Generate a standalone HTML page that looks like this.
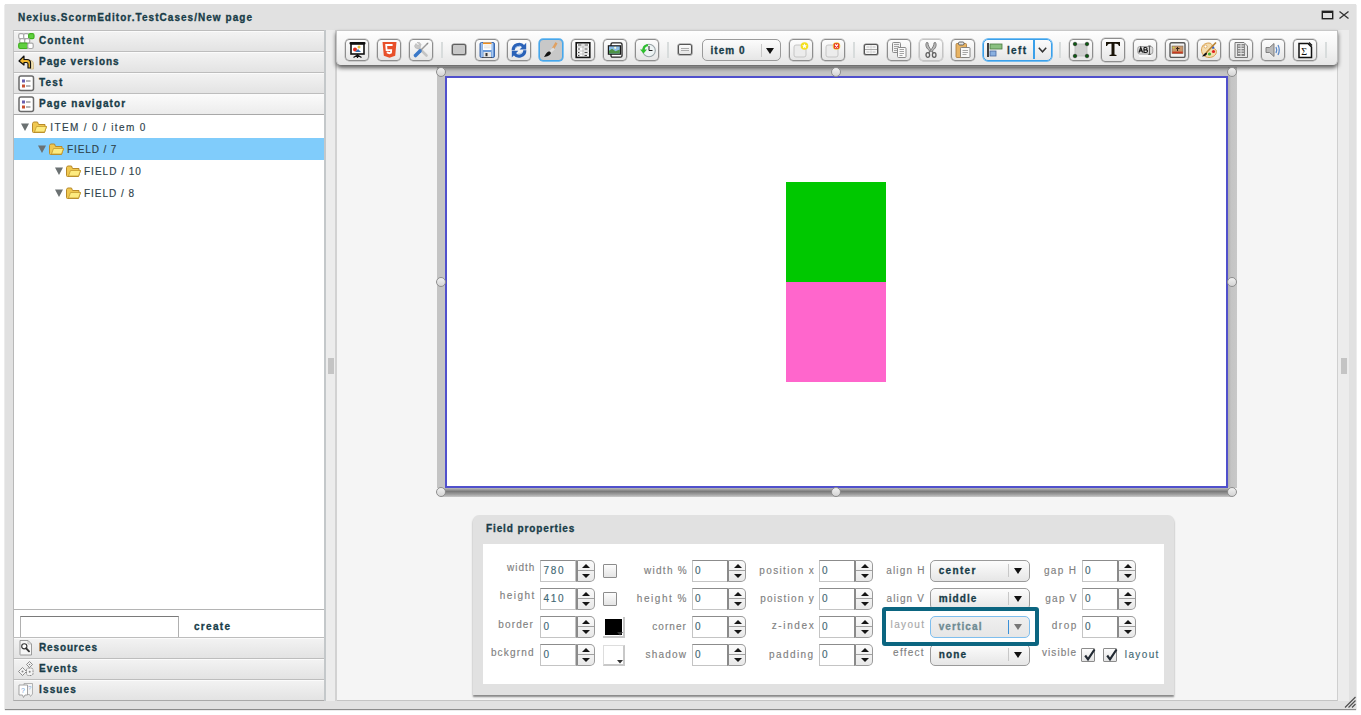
<!DOCTYPE html><html><head><meta charset="utf-8"><style>
*{box-sizing:border-box;margin:0;padding:0}
html,body{width:1361px;height:715px;overflow:hidden;background:#fff;font-family:"Liberation Sans",sans-serif;}
.a{position:absolute}
.t{position:absolute;white-space:nowrap}
svg{position:absolute;overflow:visible}
.hdr{position:absolute;left:13px;width:312px;height:22px;background:linear-gradient(#f3f3f3,#e3e3e3);border-left:1px solid #c4c4c4;border-right:1px solid #b8b8b8;border-top:1px solid #bdbdbd;border-bottom:1px solid #aaaaaa;box-shadow:inset 0 1px 0 #fbfbfb}
.btn{position:absolute;top:39px;width:24px;height:22px;border:1px solid #8e8e8e;border-radius:4px;background:linear-gradient(#fdfdfd,#e6e6e6);box-shadow:0 0 0.6px 0.4px rgba(0,0,0,0.25)}
.sep{position:absolute;top:42px;width:2px;height:16px;background:#d8dcdc}
.inp{position:absolute;width:36px;height:22px;background:#fff;border:1px solid #c4c4c4;border-top:1px solid #8c8c8c}
.spn{position:absolute;width:19px;height:22px;border:1px solid #9a9a9a;border-left:2px solid #8a8a8a;border-radius:0 5px 5px 0;background:linear-gradient(#fbfbfb,#e8e8e8)}
.spn:before{content:"";position:absolute;left:0;right:0;top:9px;height:1px;background:#a0a0a0}
.up{position:absolute;left:4.5px;top:3px;width:0;height:0;border-left:4px solid transparent;border-right:4px solid transparent;border-bottom:4.5px solid #151515}
.dn{position:absolute;left:4.5px;top:13px;width:0;height:0;border-left:4px solid transparent;border-right:4px solid transparent;border-top:4.5px solid #151515}
.dd{position:absolute;width:100px;height:21px;border:1px solid #9a9a9a;border-radius:5px;background:linear-gradient(#fcfcfc,#e6e6e6)}
.dd i{position:absolute;top:3px;width:1px;height:13px;background:#c8c8c8}
.dd b{position:absolute;top:7px;width:0;height:0;border-left:4.5px solid transparent;border-right:4.5px solid transparent;border-top:6px solid #111}
.chk{position:absolute;width:14px;height:14px;border:1px solid #8c8c8c;border-radius:1px;background:linear-gradient(#fdfdfd,#e4e4e4)}
.hnd{position:absolute;width:10px;height:10px;border-radius:50%;background:linear-gradient(#f0f0f0,#d4d4d4);border:1px solid #8e8e8e}
</style></head><body>
<div class="a " style="left:5px;top:4px;width:1351px;height:705px;background:#e1e1e1;box-shadow:0 1px 1px #8c8c8c"></div>
<div class="t" style="left:18.00px;top:11.54px;font-size:10px;line-height:12px;font-weight:bold;-webkit-text-stroke:0.3px #183c48;color:#183c48;letter-spacing:1.039px;">Nexius.ScormEditor.TestCases/New page</div>
<div class="a " style="left:1322px;top:11px;width:10.5px;height:8px;border:1px solid #222;border-top:2px solid #222;box-shadow:0 0 0 0.4px #222"></div>
<svg style="left:1339px;top:11px" width="10" height="8"><path d="M0.5 0.5L9.5 7.5M9.5 0.5L0.5 7.5" stroke="#333" stroke-width="1.3"/></svg>
<div class="a " style="left:13px;top:30px;width:312px;height:671px;background:#fff;border-left:1px solid #b8b8b8;border-right:1px solid #b8b8b8"></div>
<div class="a hdr" style="top:30px;"></div>
<svg style="left:18px;top:33px" width="16" height="16" viewBox="0 0 16 16"><rect x="0.7" y="0.7" width="5" height="5" rx="1.5" fill="#fff" stroke="#a8a8a8" stroke-width="1.2"/><rect x="5.7" y="0.7" width="5" height="5" rx="1.5" fill="#fff" stroke="#a8a8a8" stroke-width="1.2"/><rect x="10.7" y="0.7" width="5.3" height="5" rx="1.5" fill="#60d040" stroke="#40b020" stroke-width="1.2"/><rect x="1.7" y="5.7" width="5" height="4.5" rx="1.5" fill="#fff" stroke="#a8a8a8" stroke-width="1.2"/><rect x="6.7" y="5.7" width="5" height="4.5" rx="1.5" fill="#fff" stroke="#a8a8a8" stroke-width="1.2"/><rect x="0.7" y="10.2" width="9" height="5.3" rx="1.5" fill="#60d040" stroke="#40b020" stroke-width="1.2"/><rect x="9.7" y="10.2" width="5.5" height="5.3" rx="1.5" fill="#fff" stroke="#a8a8a8" stroke-width="1.2"/></svg>
<div class="t" style="left:39.00px;top:34.83px;font-size:10px;line-height:12px;font-weight:bold;-webkit-text-stroke:0.3px #183c48;color:#183c48;letter-spacing:1.139px;">Content</div>
<div class="a hdr" style="top:51px;"></div>
<svg style="left:18px;top:54px" width="16" height="16" viewBox="0 0 16 16"><path d="M11 6.5C13.5 6 15.5 7 15.5 10V15H12.5V9.5Z" fill="#f0e0b0" stroke="#c8b080" stroke-width="0.7"/><path d="M6 2L1 7L6 11V8.5H8.5C9.5 8.5 10 9 10 10V14H12.5V9C12.5 6.8 11.5 5.5 9 5.5H6Z" fill="#f0b830" stroke="#111" stroke-width="1.2" stroke-linejoin="round"/></svg>
<div class="t" style="left:39.00px;top:55.83px;font-size:10px;line-height:12px;font-weight:bold;-webkit-text-stroke:0.3px #183c48;color:#183c48;letter-spacing:0.989px;">Page versions</div>
<div class="a hdr" style="top:72px;"></div>
<svg style="left:18px;top:75px" width="16" height="16" viewBox="0 0 16 16"><rect x="1" y="1" width="14.5" height="14.5" rx="2" fill="#fff" stroke="#6a6a6a" stroke-width="1.5"/><rect x="4" y="4.5" width="3" height="3" fill="#6a60b0"/><rect x="4" y="9.5" width="3" height="3" fill="#c85030"/><path d="M8 6H12.5M8 11H12.5" stroke="#444" stroke-width="0.8"/></svg>
<div class="t" style="left:39.00px;top:76.83px;font-size:10px;line-height:12px;font-weight:bold;-webkit-text-stroke:0.3px #183c48;color:#183c48;letter-spacing:1.191px;">Test</div>
<div class="a hdr" style="top:93px;background:linear-gradient(#fbfbfb,#ececec);"></div>
<svg style="left:18px;top:96px" width="16" height="16" viewBox="0 0 16 16"><rect x="1" y="1" width="14.5" height="14.5" rx="2" fill="#fff" stroke="#6a6a6a" stroke-width="1.5"/><rect x="4" y="4.5" width="3" height="3" fill="#6a60b0"/><rect x="4" y="9.5" width="3" height="3" fill="#c85030"/><path d="M8 6H12.5M8 11H12.5" stroke="#444" stroke-width="0.8"/></svg>
<div class="t" style="left:39.00px;top:97.83px;font-size:10px;line-height:12px;font-weight:bold;-webkit-text-stroke:0.3px #183c48;color:#183c48;letter-spacing:1.115px;">Page navigator</div>
<div class="a " style="left:14px;top:114px;width:310px;height:1px;background:#a8a8a8"></div>
<div class="a " style="left:14px;top:138px;width:310px;height:22px;background:#80ccfb"></div>
<div class="a " style="left:14px;top:609px;width:310px;height:1px;background:#b4b4b4"></div>
<svg style="left:21px;top:123.4px" width="8" height="8"><path d="M0 0.5H8L4 8Z" fill="#6b7172"/></svg>
<svg style="left:32px;top:120.9px" width="15" height="12" viewBox="0 0 15 12"><path d="M0.5 2.5 L0.5 10.5 Q0.5 11.5 1.5 11.5 L12.5 11.5 L14.5 5.5 L13 5.5 L13 3.5 L6.5 3.5 L5.5 1 L1.5 1 Z" fill="#f0c850" stroke="#b88a2a" stroke-width="1"/><path d="M2.5 11 L4.5 5.5 L14.5 5.5 L12.5 11 Z" fill="#fdeb80" stroke="#c49c30" stroke-width="0.8"/></svg>
<div class="t" style="left:50.30px;top:121.74px;font-size:10px;line-height:12px;-webkit-text-stroke:0.15px #2e424a;color:#2e424a;letter-spacing:1.352px;">ITEM / 0 / item 0</div>
<svg style="left:38px;top:145.4px" width="8" height="8"><path d="M0 0.5H8L4 8Z" fill="#6b7172"/></svg>
<svg style="left:49px;top:142.9px" width="15" height="12" viewBox="0 0 15 12"><path d="M0.5 2.5 L0.5 10.5 Q0.5 11.5 1.5 11.5 L12.5 11.5 L14.5 5.5 L13 5.5 L13 3.5 L6.5 3.5 L5.5 1 L1.5 1 Z" fill="#f0c850" stroke="#b88a2a" stroke-width="1"/><path d="M2.5 11 L4.5 5.5 L14.5 5.5 L12.5 11 Z" fill="#fdeb80" stroke="#c49c30" stroke-width="0.8"/></svg>
<div class="t" style="left:67.00px;top:143.74px;font-size:10px;line-height:12px;-webkit-text-stroke:0.15px #2e424a;color:#2e424a;letter-spacing:0.894px;">FIELD / 7</div>
<svg style="left:54.5px;top:167.4px" width="8" height="8"><path d="M0 0.5H8L4 8Z" fill="#6b7172"/></svg>
<svg style="left:66px;top:164.9px" width="15" height="12" viewBox="0 0 15 12"><path d="M0.5 2.5 L0.5 10.5 Q0.5 11.5 1.5 11.5 L12.5 11.5 L14.5 5.5 L13 5.5 L13 3.5 L6.5 3.5 L5.5 1 L1.5 1 Z" fill="#f0c850" stroke="#b88a2a" stroke-width="1"/><path d="M2.5 11 L4.5 5.5 L14.5 5.5 L12.5 11 Z" fill="#fdeb80" stroke="#c49c30" stroke-width="0.8"/></svg>
<div class="t" style="left:84.00px;top:165.74px;font-size:10px;line-height:12px;-webkit-text-stroke:0.15px #2e424a;color:#2e424a;letter-spacing:1.010px;">FIELD / 10</div>
<svg style="left:54.5px;top:189.4px" width="8" height="8"><path d="M0 0.5H8L4 8Z" fill="#6b7172"/></svg>
<svg style="left:66px;top:186.9px" width="15" height="12" viewBox="0 0 15 12"><path d="M0.5 2.5 L0.5 10.5 Q0.5 11.5 1.5 11.5 L12.5 11.5 L14.5 5.5 L13 5.5 L13 3.5 L6.5 3.5 L5.5 1 L1.5 1 Z" fill="#f0c850" stroke="#b88a2a" stroke-width="1"/><path d="M2.5 11 L4.5 5.5 L14.5 5.5 L12.5 11 Z" fill="#fdeb80" stroke="#c49c30" stroke-width="0.8"/></svg>
<div class="t" style="left:84.00px;top:187.74px;font-size:10px;line-height:12px;-webkit-text-stroke:0.15px #2e424a;color:#2e424a;letter-spacing:0.969px;">FIELD / 8</div>
<div class="a " style="left:20px;top:616px;width:159px;height:22px;background:#fff;border:1px solid #b0b0b0;border-top:1px solid #7a7a7a;border-bottom:none"></div>
<div class="t" style="left:194.00px;top:620.83px;font-size:10px;line-height:12px;font-weight:bold;-webkit-text-stroke:0.3px #183c48;color:#183c48;letter-spacing:1.306px;">create</div>
<div class="a hdr" style="top:637px;"></div>
<svg style="left:18px;top:640px" width="16" height="16" viewBox="0 0 16 16"><path d="M2 0.5H10L13.5 4V15H2.5Q2 15 2 14.5Z" fill="#f6f6f6" stroke="#909090" stroke-width="0.9"/><path d="M10 0.5V4H13.5" fill="none" stroke="#aaa" stroke-width="0.7"/><circle cx="6.3" cy="6.3" r="2.6" fill="#fff" stroke="#333" stroke-width="1.1"/><path d="M8.2 8.3L11 11.3" stroke="#333" stroke-width="1.9" stroke-linecap="round"/></svg>
<div class="t" style="left:39.00px;top:641.83px;font-size:10px;line-height:12px;font-weight:bold;-webkit-text-stroke:0.3px #183c48;color:#183c48;letter-spacing:0.857px;">Resources</div>
<div class="a hdr" style="top:658px;"></div>
<svg style="left:18px;top:661px" width="16" height="16" viewBox="0 0 16 16"><path d="M11.5 0.5L13 2L14.5 3.5L13 5L11.5 6.5L10 5L8.5 3.5L10 2Z" fill="#f4f4f4" stroke="#808080" stroke-width="0.9"/><circle cx="11.5" cy="3.5" r="0.8" fill="#888"/><path d="M4.5 6.5L6.5 8.5L8.5 10.5L6.5 12.5L4.5 14.5L2.5 12.5L0.5 10.5L2.5 8.5Z" fill="#f4f4f4" stroke="#808080" stroke-width="0.9"/><circle cx="4.5" cy="10.5" r="1" fill="#888"/><rect x="8.5" y="7" width="6.5" height="7.5" rx="2" fill="#f4f4f4" stroke="#808080" stroke-width="0.9" stroke-dasharray="2 0.8"/><circle cx="11.7" cy="10.7" r="1" fill="#888"/></svg>
<div class="t" style="left:39.00px;top:662.83px;font-size:10px;line-height:12px;font-weight:bold;-webkit-text-stroke:0.3px #183c48;color:#183c48;letter-spacing:1.101px;">Events</div>
<div class="a hdr" style="top:679px;"></div>
<svg style="left:18px;top:682px" width="16" height="16" viewBox="0 0 16 16"><path d="M6 1.5H14.5V12L12.5 14.5L11.5 12.5H6Z" fill="#f4f4f4" stroke="#aaa" stroke-width="0.9"/><path d="M1 3H9.5V13H7L5.5 15.5L4.5 13H1Z" fill="#fff" stroke="#999" stroke-width="0.9"/><text x="3" y="11" font-size="7" font-family="Liberation Sans" fill="#6a9ad0">?</text><text x="10" y="8" font-size="6" font-family="Liberation Sans" fill="#8ab0e0">?</text></svg>
<div class="t" style="left:39.00px;top:683.83px;font-size:10px;line-height:12px;font-weight:bold;-webkit-text-stroke:0.3px #183c48;color:#183c48;letter-spacing:1.152px;">Issues</div>
<div class="a " style="left:324px;top:30px;width:2px;height:671px;background:#c4c8ca"></div>
<div class="a " style="left:326px;top:30px;width:9px;height:671px;background:#ececec"></div>
<div class="a " style="left:335px;top:30px;width:2px;height:671px;background:#d2d2d2"></div>
<div class="a " style="left:328px;top:358px;width:6px;height:16px;background:#c4c4c4"></div>
<div class="a " style="left:337px;top:30px;width:1001px;height:671px;background:#f5f5f5;border-right:1px solid #cfcfcf;border-bottom:1px solid #c4c4c4"></div>
<div class="a " style="left:1338px;top:30px;width:11px;height:671px;background:#ececec"></div>
<div class="a " style="left:1341px;top:358px;width:6px;height:16px;background:#c4c4c4"></div>
<svg style="left:1344px;top:696px" width="12" height="12"><path d="M1 11.5L11.5 1M4.5 11.5L11.5 4.5M8 11.5L11.5 8" stroke="#505050" stroke-width="1.2"/></svg>
<div class="a " style="left:437px;top:67px;width:800px;height:421px;background:#c4c4c4"></div>
<div class="a " style="left:1228px;top:67px;width:9px;height:420px;background:linear-gradient(90deg,#b0b0b0,#c4c4c4 35%,#c8c8c8)"></div>
<div class="a " style="left:441px;top:488px;width:790px;height:9px;background:linear-gradient(#bababa,#7a7a7a 38%,#a4a4a4 75%,#cacaca)"></div>
<div class="a " style="left:445px;top:76px;width:783px;height:412px;background:#fff;border:2px solid #5050cc"></div>
<div class="a " style="left:786px;top:182px;width:100px;height:100px;background:#00c800"></div>
<div class="a " style="left:786px;top:282px;width:100px;height:100px;background:#ff66cc"></div>
<div class="a " style="left:336px;top:30px;width:1002px;height:35px;background:linear-gradient(#fefefe,#f4f4f4 50%,#e6e6e6);border-right:1px solid #bcbcbc;border-left:1px solid #c4c4c4;border-top:1px solid #c8c8c8;border-radius:0 0 5px 5px;box-shadow:0 3px 4px rgba(0,0,0,0.62)"></div>
<div class="a hnd" style="left:436.2px;top:67.2px"></div>
<div class="a hnd" style="left:831.0px;top:67.2px"></div>
<div class="a hnd" style="left:1226.6px;top:67.2px"></div>
<div class="a hnd" style="left:436.2px;top:277.0px"></div>
<div class="a hnd" style="left:1226.6px;top:277.0px"></div>
<div class="a hnd" style="left:436.2px;top:487.0px"></div>
<div class="a hnd" style="left:831.0px;top:487.0px"></div>
<div class="a hnd" style="left:1226.6px;top:487.0px"></div>
<div class="btn" style="left:345px;"><svg style="left:3px;top:2px" width="16" height="16" viewBox="0 0 16 16"><rect x="0.5" y="0" width="16" height="2.6" rx="1" fill="#111"/><rect x="2" y="2" width="13" height="10" fill="#fff" stroke="#111" stroke-width="1.6"/><circle cx="6" cy="7.5" r="2" fill="#e03020"/><circle cx="10" cy="5" r="1.5" fill="#e8c040"/><path d="M6 10L9 7L12 10Z" fill="#3a70b0"/><path d="M8.5 12V16M8.5 13L4.5 15.5M8.5 13L12.5 15.5" stroke="#111" stroke-width="1.3"/></svg></div>
<div class="btn" style="left:377px;"><svg style="left:3px;top:2px" width="16" height="16" viewBox="0 0 16 16"><path d="M1.5 0H15.5L14.2 13.8L8.5 15.8L2.8 13.8Z" fill="#e8502a"/><path d="M11.6 3H5.2L5.6 8.2H10.2L10 10.6L8.4 11.2L6.6 10.6L6.5 9.6" fill="none" stroke="#fff" stroke-width="1.8"/></svg></div>
<div class="btn" style="left:409px;"><svg style="left:3px;top:2px" width="16" height="16" viewBox="0 0 16 16"><path d="M4.5 4.5L13.5 13.5" stroke="#c4c4c4" stroke-width="2.6" stroke-linecap="round"/><path d="M1.5 4L3 1.5L5 3.5L6.5 2L4 0.5L6.5 0.5L8 2.5L7 5.5L5.5 7L2.5 6Z" fill="#c8c8c8" stroke="#aaa" stroke-width="0.5"/><path d="M15 1L7.5 8.5" stroke="#9a9a9a" stroke-width="1.5"/><path d="M15.5 0.5L13.5 1.5L14.5 2.5Z" fill="#888"/><path d="M7 9L2.5 13.5" stroke="#3a78c8" stroke-width="3.6" stroke-linecap="round"/></svg></div>
<div class="a sep" style="left:441px"></div>
<div class="a " style="left:452px;top:44px;width:14px;height:11px;border:1px solid #5e5e5e;box-shadow:0 0 0 0.6px rgba(90,90,90,0.7);border-radius:2px;background:#c8c8c8"></div>
<div class="btn" style="left:475px;"><svg style="left:3px;top:2px" width="16" height="16" viewBox="0 0 16 16"><rect x="1" y="0.5" width="14.5" height="15" rx="1.5" fill="#6a9ad8" stroke="#3e6ab0" stroke-width="1"/><rect x="2.2" y="1" width="1.4" height="14" fill="#a8c8f0"/><rect x="12.6" y="1" width="1.4" height="14" fill="#a8c8f0"/><rect x="4" y="0.5" width="8.5" height="7.5" fill="#fff"/><rect x="4" y="0.5" width="8.5" height="1.6" fill="#f0901e"/><path d="M5 4H11.5M5 5.8H11.5" stroke="#ccc" stroke-width="0.6"/><rect x="4.5" y="10" width="7.5" height="5.5" fill="#e6e6e6"/><rect x="6.5" y="11" width="2" height="3.2" fill="#333"/><rect x="3" y="15" width="10" height="0.8" fill="#444"/></svg></div>
<div class="btn" style="left:507px;"><svg style="left:3px;top:2px" width="16" height="16" viewBox="0 0 16 16"><path d="M2.2 8.2A5.8 5.8 0 0 1 12.6 4.6" fill="none" stroke="#2a62b8" stroke-width="3.2"/><path d="M15.2 0.8V7.6H8.6Z" fill="#2a62b8"/><path d="M13.8 8.2A5.8 5.8 0 0 1 3.4 11.8" fill="none" stroke="#2a62b8" stroke-width="3.2"/><path d="M0.8 15.6V8.8H7.4Z" fill="#2a62b8"/><path d="M4 6.5Q6 4 9.5 4.2M12 10Q10 12.3 6.5 12.2" fill="none" stroke="#8ab4e8" stroke-width="0.8"/></svg></div>
<div class="btn" style="left:539px;border:1px solid #46a6ea;box-shadow:0 0 0 0.7px #56b0f0;background:#c8c8c8;"><svg style="left:3px;top:2px" width="16" height="16" viewBox="0 0 16 16"><path d="M14.5 1.5L12.5 0L9 6L11 7.5Z" fill="#e0a060"/><path d="M11 6.5L6 11" stroke="#ddd" stroke-width="2.4"/><path d="M7 9.5C4 9 3 12 1 15C4 14.5 7.5 13.5 8 11Z" fill="#111"/></svg></div>
<div class="btn" style="left:571px;"><svg style="left:3px;top:2px" width="16" height="16" viewBox="0 0 16 16"><rect x="1.2" y="0.8" width="13.6" height="14.6" fill="#fff" stroke="#151515" stroke-width="1.6"/><path d="M2 5H14M2 9H14M2 12H14M8 1V15" stroke="#9a9a9a" stroke-width="0.6"/><path d="M3 3H6.5M9.5 3H13M3 7H5M9.5 7H12.5M3 10.5H4.5M9.5 10.5H12.5M3 13.5H4.5M9.5 13.5H12" stroke="#333" stroke-width="0.9"/></svg></div>
<div class="btn" style="left:603px;"><svg style="left:3px;top:2px" width="16" height="16" viewBox="0 0 16 16"><rect x="4" y="0.8" width="11" height="14.4" rx="1.5" fill="#fff" stroke="#222" stroke-width="1.3"/><rect x="0.8" y="3.2" width="13.2" height="9.6" fill="#1a1a1a"/><rect x="2" y="4.4" width="10.8" height="7.2" fill="#8cbce6"/><path d="M2 11.6V8.8L5 6.8L8.5 9.2L12.8 7.4V11.6Z" fill="#4e9446"/><circle cx="8.2" cy="5.8" r="1.1" fill="#fafad0"/></svg></div>
<div class="btn" style="left:635px;"><svg style="left:3px;top:2px" width="16" height="16" viewBox="0 0 16 16"><circle cx="10" cy="8.5" r="6.3" fill="#eef4f4" stroke="#9aa4a8" stroke-width="1.1"/><path d="M10 4V8.5H13.5" fill="none" stroke="#222" stroke-width="1"/><path d="M9 2.2C5.5 2.2 3.5 4.5 3.5 7.5L1 7.5L4.5 11.5L8 7.5L5.8 7.5C5.8 5.5 7 4.2 9 4.2Z" fill="#2ec02e"/></svg></div>
<div class="a sep" style="left:667px"></div>
<div class="a " style="left:678px;top:44px;width:14px;height:11px;border:1px solid #555;box-shadow:0 0 0 0.6px rgba(85,85,85,0.7);border-radius:2px;background:linear-gradient(#fafafa,#e4e4e4)"></div>
<div class="a" style="left:681px;top:48px;width:8px;height:3px;border-top:1px solid #aaa;border-bottom:1px solid #aaa"></div>
<div class="dd" style="left:702px;top:39px;width:79px;height:22px;border-radius:5px"><i style="left:58px;top:4px"></i><b style="left:63px;top:8px"></b></div>
<div class="t" style="left:710.50px;top:44.53px;font-size:10px;line-height:12px;font-weight:bold;-webkit-text-stroke:0.3px #183c48;color:#183c48;letter-spacing:1.019px;">item 0</div>
<div class="btn" style="left:789px;"><svg style="left:3px;top:2px" width="16" height="16" viewBox="0 0 16 16"><rect x="1" y="3" width="12" height="12" rx="2" fill="#ececec" stroke="#bbb" stroke-width="0.8"/><circle cx="11.5" cy="4" r="3.8" fill="#f4e020"/><path d="M11.5 1.6L12.3 3.3L14 3.4L12.7 4.5L13.1 6.2L11.5 5.3L9.9 6.2L10.3 4.5L9 3.4L10.7 3.3Z" fill="#fff"/></svg></div>
<div class="btn" style="left:821px;"><svg style="left:3px;top:2px" width="16" height="16" viewBox="0 0 16 16"><rect x="1" y="3" width="12" height="12" rx="2" fill="#ececec" stroke="#bbb" stroke-width="0.8"/><circle cx="11.5" cy="4" r="3.8" fill="#f0d040"/><rect x="8.8" y="1.3" width="5.4" height="5.4" rx="1" fill="#e83020"/><path d="M10 2.5L13 5.5M13 2.5L10 5.5" stroke="#fff" stroke-width="1.1"/></svg></div>
<div class="a sep" style="left:853px"></div>
<div class="a " style="left:864px;top:44px;width:14px;height:11px;border:1px solid #555;box-shadow:0 0 0 0.6px rgba(85,85,85,0.7);border-radius:2px;background:#f6f6f6"></div>
<svg style="left:865px;top:45px" width="12" height="9"><path d="M0 4.5H12" stroke="#aaa" stroke-width="1"/><path d="M1.5 2H4.5M7.5 2H10.5M1.5 7H4.5M7.5 7H10.5" stroke="#c0c0c0" stroke-width="1.2"/><path d="M6 0.5V3.5M6 5.5V8.5" stroke="#bbb" stroke-width="0.8"/></svg>
<div class="btn" style="left:887px;"><svg style="left:3px;top:2px" width="16" height="16" viewBox="0 0 16 16"><rect x="1.5" y="0.5" width="8" height="10" rx="1" fill="#f2f2f2" stroke="#8a8a8a" stroke-width="1"/><path d="M3 2.5H8M3 4.5H8M3 6.5H8M3 8.5H6" stroke="#9a9a9a" stroke-width="0.9"/><rect x="6.5" y="5.5" width="8.5" height="10" rx="1" fill="#fafafa" stroke="#8a8a8a" stroke-width="1"/><path d="M8.5 7.5H13M8.5 9.5H13M8.5 11.5H13M8.5 13.5H11.5" stroke="#9a9a9a" stroke-width="0.9"/></svg></div>
<div class="btn" style="left:919px;border-color:#c4c4c4;"><svg style="left:3px;top:2px" width="16" height="16" viewBox="0 0 16 16"><path d="M3.5 0.5C2 3 3 6.5 7.5 9.5L8.5 8.3C6 5.5 5 3 5 0.8Z" fill="#b8b8b8" stroke="#6a6a6a" stroke-width="0.8"/><path d="M12.5 0.5C14 3 13 6.5 8.5 9.5L7.5 8.3C10 5.5 11 3 11 0.8Z" fill="#b8b8b8" stroke="#6a6a6a" stroke-width="0.8"/><ellipse cx="4.8" cy="13" rx="1.8" ry="2.3" fill="none" stroke="#606060" stroke-width="1.3"/><ellipse cx="11.2" cy="13" rx="1.8" ry="2.3" fill="none" stroke="#606060" stroke-width="1.3"/><path d="M7 9.5L5.5 10.8M9 9.5L10.5 10.8" stroke="#606060" stroke-width="1.2"/></svg></div>
<div class="btn" style="left:951px;"><svg style="left:3px;top:2px" width="16" height="16" viewBox="0 0 16 16"><rect x="1" y="1.5" width="10.5" height="14" rx="1" fill="#e8b464" stroke="#a8783a" stroke-width="0.8"/><rect x="3.5" y="0" width="5.5" height="3" rx="1.2" fill="#e4e4e4" stroke="#555" stroke-width="0.9"/><rect x="5.5" y="5.5" width="9.5" height="10" rx="0.8" fill="#f8f8f8" stroke="#7a7a7a" stroke-width="0.9"/><path d="M7.5 8.5H13M7.5 10.5H13M7.5 12.5H11.5" stroke="#909090" stroke-width="0.8"/></svg></div>
<div class="dd" style="left:983px;top:39px;width:69px;height:22px;border:1px solid #3aa0ea;box-shadow:0 0 0 0.7px #4aaaf0;border-radius:5px"><i style="left:49px;top:0;height:19px;width:1.5px;background:#3aa0ea"></i></div>
<svg style="left:987px;top:43px" width="16" height="14" viewBox="0 0 16 14"><path d="M1 0V14" stroke="#111" stroke-width="1.6"/><rect x="3" y="1" width="12" height="5" fill="#8ac080" stroke="#4a7a40" stroke-width="0.8"/><rect x="3" y="8" width="6" height="5" fill="#8ab0e0" stroke="#4a6aa0" stroke-width="0.8"/></svg>
<div class="t" style="left:1007.00px;top:44.53px;font-size:10px;line-height:12px;font-weight:bold;-webkit-text-stroke:0.3px #183c48;color:#183c48;letter-spacing:1.333px;">left</div>
<svg style="left:1038px;top:47px" width="9" height="6"><path d="M0.8 0.8L4.5 4.8L8.2 0.8" fill="none" stroke="#333" stroke-width="1.5"/></svg>
<div class="a sep" style="left:1059px"></div>
<div class="btn" style="left:1069px;"><svg style="left:3px;top:2px" width="16" height="16" viewBox="0 0 16 16"><rect x="2" y="2" width="12" height="12" fill="#d0d0d0" stroke="#bbb" stroke-width="0.8"/><circle cx="2" cy="2" r="1.8" fill="#0a5a10" stroke="#111" stroke-width="0.5"/><circle cx="14" cy="2" r="1.8" fill="#0a5a10" stroke="#111" stroke-width="0.5"/><circle cx="2" cy="14" r="1.8" fill="#0a5a10" stroke="#111" stroke-width="0.5"/><circle cx="14" cy="14" r="1.8" fill="#0a5a10" stroke="#111" stroke-width="0.5"/></svg></div>
<div class="btn" style="left:1101px;top:38px;height:24px;"><svg style="left:3px;top:2px" width="16" height="16" viewBox="0 0 16 16"><path d="M1 1H15V5L14 5Q13.5 2.8 11 2.8H9.5V13.5L11.5 14V15H4.5V14L6.5 13.5V2.8H5Q2.5 2.8 2 5L1 5Z" fill="#1a1408"/></svg></div>
<div class="btn" style="left:1133px;"><svg style="left:3px;top:2px" width="16" height="16" viewBox="0 0 16 16"><rect x="0.8" y="4.5" width="15" height="7.5" rx="2" fill="#dcdcdc" stroke="#9a9a9a" stroke-width="0.9"/><path d="M2 10.5L3.8 5.5L5.6 10.5M2.7 8.8H4.9" fill="none" stroke="#1a1a1a" stroke-width="1.2"/><path d="M7 5.5V10.5H9Q10.5 10.5 10.5 9Q10.5 7.8 9 7.8H7M7 5.5H8.8Q10 5.5 10 6.7Q10 7.8 8.8 7.8" fill="none" stroke="#1a1a1a" stroke-width="1.2"/><path d="M12.5 4V12.5M11.3 4H13.7M11.3 12.5H13.7" stroke="#555" stroke-width="1.1"/><rect x="2" y="13" width="12.5" height="2" fill="#fafafa"/></svg></div>
<div class="btn" style="left:1165px;"><svg style="left:3px;top:2px" width="16" height="16" viewBox="0 0 16 16"><rect x="1" y="0.8" width="15" height="14.6" rx="1.5" fill="#f2f2f2" stroke="#5a5a5a" stroke-width="1.4"/><rect x="3" y="4" width="11" height="7.6" fill="#c8966a" stroke="#7a6a5a" stroke-width="0.6"/><rect x="3.3" y="9.6" width="10.4" height="1.8" fill="#c83a22"/><circle cx="4.6" cy="5.6" r="0.9" fill="#c8e040"/><path d="M8.5 5V9M7 6.5H10.5" stroke="#3a2a1a" stroke-width="1"/></svg></div>
<div class="btn" style="left:1197px;"><svg style="left:3px;top:2px" width="16" height="16" viewBox="0 0 16 16"><path d="M8 1C3 1 0.5 4 0.5 8C0.5 12.5 4 15.5 8 15.5C12 15.5 15.5 13 15.5 9.5C15.5 7 13 7 12 5.5C11 3.5 11 1 8 1Z" fill="#f4dcae" stroke="#d8a050" stroke-width="1"/><circle cx="4.5" cy="4.5" r="1.5" fill="#fff" stroke="#d8a050" stroke-width="0.8"/><circle cx="12.5" cy="9.5" r="1.6" fill="#e02020"/><circle cx="8.5" cy="12" r="1.6" fill="#40b030"/><circle cx="12" cy="5.5" r="1.3" fill="#3060d0"/><path d="M15 0.5L5 11" stroke="#b88030" stroke-width="1.6"/><path d="M5.5 10.5C3 11 2.5 13 1 14.5C3.5 14.5 6 13.5 6 11.5Z" fill="#111"/></svg></div>
<div class="btn" style="left:1229px;"><svg style="left:3px;top:2px" width="16" height="16" viewBox="0 0 16 16"><path d="M2 0.5H11L14.5 4V15.5H2Z" fill="#e8e8e8" stroke="#777" stroke-width="1"/><rect x="4" y="2" width="8" height="12" fill="#888"/><path d="M5 4H11M5 6.5H11M5 9H11M5 11.5H11" stroke="#eee" stroke-width="0.9"/><path d="M8 2V14" stroke="#ddd" stroke-width="1"/></svg></div>
<div class="btn" style="left:1261px;"><svg style="left:3px;top:2px" width="16" height="16" viewBox="0 0 16 16"><path d="M1 5.5H4.5L9 1.5V14.5L4.5 10.5H1Z" fill="#bbb" stroke="#777" stroke-width="0.9"/><path d="M11 5Q12.5 8 11 11M13 3Q15.5 8 13 13" fill="none" stroke="#5a88c8" stroke-width="1.3"/></svg></div>
<div class="btn" style="left:1293px;"><svg style="left:3px;top:2px" width="16" height="16" viewBox="0 0 16 16"><path d="M2 1.5H11L14.5 5V15.5H2Z" fill="#fff" stroke="#111" stroke-width="1.5"/><path d="M12 0.5L15 3.5" stroke="#111" stroke-width="1.2"/><text x="4.2" y="12.5" font-family="Liberation Serif" font-size="10" fill="#111">&#931;</text></svg></div>
<div class="a sep" style="left:1325px"></div>
<div class="a " style="left:473px;top:515px;width:701px;height:180px;background:#e1e1e1;border-radius:6px 6px 0 0;box-shadow:0 2px 2px rgba(0,0,0,0.45)"></div>
<div class="t" style="left:486.00px;top:522.53px;font-size:10px;line-height:12px;font-weight:bold;-webkit-text-stroke:0.3px #183c48;color:#183c48;letter-spacing:0.891px;">Field properties</div>
<div class="a " style="left:483px;top:544px;width:681px;height:140px;background:#fff"></div>
<div class="t" style="left:506.94px;top:562.43px;font-size:10px;line-height:12px;-webkit-text-stroke:0.15px #7f7f7f;color:#7f7f7f;letter-spacing:1.014px;">width</div>
<div class="a inp" style="left:540px;top:560px"></div>
<div class="a spn" style="left:575.5px;top:560px"><div class="up"></div><div class="dn"></div></div>
<div class="t" style="left:543.50px;top:564.63px;font-size:10px;line-height:12px;-webkit-text-stroke:0.15px #3f6874;color:#3f6874;letter-spacing:1.656px;">780</div>
<div class="t" style="left:644.12px;top:564.83px;font-size:10px;line-height:12px;-webkit-text-stroke:0.15px #7f7f7f;color:#7f7f7f;letter-spacing:1.247px;">width %</div>
<div class="a inp" style="left:691.5px;top:560px"></div>
<div class="a spn" style="left:727.0px;top:560px"><div class="up"></div><div class="dn"></div></div>
<div class="t" style="left:695.00px;top:564.63px;font-size:10px;line-height:12px;-webkit-text-stroke:0.15px #3f6874;color:#3f6874;letter-spacing:0.000px;">0</div>
<div class="t" style="left:759.35px;top:565.03px;font-size:10px;line-height:12px;-webkit-text-stroke:0.15px #7f7f7f;color:#7f7f7f;letter-spacing:1.350px;">position x</div>
<div class="a inp" style="left:818.5px;top:560px"></div>
<div class="a spn" style="left:854.0px;top:560px"><div class="up"></div><div class="dn"></div></div>
<div class="t" style="left:822.00px;top:564.63px;font-size:10px;line-height:12px;-webkit-text-stroke:0.15px #3f6874;color:#3f6874;letter-spacing:0.000px;">0</div>
<div class="t" style="left:886.22px;top:565.03px;font-size:10px;line-height:12px;-webkit-text-stroke:0.15px #7f7f7f;color:#7f7f7f;letter-spacing:1.179px;">align H</div>
<div class="dd" style="left:930px;top:560px;width:100px;height:22px"><i style="left:77px"></i><b style="left:83px"></b></div>
<div class="t" style="left:938.70px;top:564.83px;font-size:10px;line-height:12px;font-weight:bold;-webkit-text-stroke:0.3px #183c48;color:#183c48;letter-spacing:1.337px;">center</div>
<div class="t" style="left:1043.89px;top:565.03px;font-size:10px;line-height:12px;-webkit-text-stroke:0.15px #7f7f7f;color:#7f7f7f;letter-spacing:1.353px;">gap H</div>
<div class="a inp" style="left:1081.5px;top:560px"></div>
<div class="a spn" style="left:1117.0px;top:560px"><div class="up"></div><div class="dn"></div></div>
<div class="t" style="left:1085.00px;top:564.63px;font-size:10px;line-height:12px;-webkit-text-stroke:0.15px #3f6874;color:#3f6874;letter-spacing:0.000px;">0</div>
<div class="t" style="left:499.65px;top:590.24px;font-size:10px;line-height:12px;-webkit-text-stroke:0.15px #7f7f7f;color:#7f7f7f;letter-spacing:1.470px;">height</div>
<div class="a inp" style="left:540px;top:588px"></div>
<div class="a spn" style="left:575.5px;top:588px"><div class="up"></div><div class="dn"></div></div>
<div class="t" style="left:543.50px;top:592.63px;font-size:10px;line-height:12px;-webkit-text-stroke:0.15px #3f6874;color:#3f6874;letter-spacing:1.656px;">410</div>
<div class="t" style="left:636.82px;top:592.74px;font-size:10px;line-height:12px;-webkit-text-stroke:0.15px #7f7f7f;color:#7f7f7f;letter-spacing:1.540px;">height %</div>
<div class="a inp" style="left:691.5px;top:588px"></div>
<div class="a spn" style="left:727.0px;top:588px"><div class="up"></div><div class="dn"></div></div>
<div class="t" style="left:695.00px;top:592.63px;font-size:10px;line-height:12px;-webkit-text-stroke:0.15px #3f6874;color:#3f6874;letter-spacing:0.000px;">0</div>
<div class="t" style="left:760.25px;top:592.53px;font-size:10px;line-height:12px;-webkit-text-stroke:0.15px #7f7f7f;color:#7f7f7f;letter-spacing:1.250px;">poistion y</div>
<div class="a inp" style="left:818.5px;top:588px"></div>
<div class="a spn" style="left:854.0px;top:588px"><div class="up"></div><div class="dn"></div></div>
<div class="t" style="left:822.00px;top:592.63px;font-size:10px;line-height:12px;-webkit-text-stroke:0.15px #3f6874;color:#3f6874;letter-spacing:0.000px;">0</div>
<div class="t" style="left:886.58px;top:592.53px;font-size:10px;line-height:12px;-webkit-text-stroke:0.15px #7f7f7f;color:#7f7f7f;letter-spacing:1.120px;">align V</div>
<div class="dd" style="left:930px;top:588px;width:100px;height:22px"><i style="left:77px"></i><b style="left:83px"></b></div>
<div class="t" style="left:938.70px;top:592.83px;font-size:10px;line-height:12px;font-weight:bold;-webkit-text-stroke:0.3px #183c48;color:#183c48;letter-spacing:1.093px;">middle</div>
<div class="t" style="left:1045.24px;top:592.53px;font-size:10px;line-height:12px;-webkit-text-stroke:0.15px #7f7f7f;color:#7f7f7f;letter-spacing:1.265px;">gap V</div>
<div class="a inp" style="left:1081.5px;top:588px"></div>
<div class="a spn" style="left:1117.0px;top:588px"><div class="up"></div><div class="dn"></div></div>
<div class="t" style="left:1085.00px;top:592.63px;font-size:10px;line-height:12px;-webkit-text-stroke:0.15px #3f6874;color:#3f6874;letter-spacing:0.000px;">0</div>
<div class="t" style="left:498.21px;top:618.74px;font-size:10px;line-height:12px;-webkit-text-stroke:0.15px #7f7f7f;color:#7f7f7f;letter-spacing:1.159px;">border</div>
<div class="a inp" style="left:540px;top:616px"></div>
<div class="a spn" style="left:575.5px;top:616px"><div class="up"></div><div class="dn"></div></div>
<div class="t" style="left:543.50px;top:620.63px;font-size:10px;line-height:12px;-webkit-text-stroke:0.15px #3f6874;color:#3f6874;letter-spacing:0.000px;">0</div>
<div class="t" style="left:652.24px;top:620.74px;font-size:10px;line-height:12px;-webkit-text-stroke:0.15px #7f7f7f;color:#7f7f7f;letter-spacing:1.071px;">corner</div>
<div class="a inp" style="left:691.5px;top:616px"></div>
<div class="a spn" style="left:727.0px;top:616px"><div class="up"></div><div class="dn"></div></div>
<div class="t" style="left:695.00px;top:620.63px;font-size:10px;line-height:12px;-webkit-text-stroke:0.15px #3f6874;color:#3f6874;letter-spacing:0.000px;">0</div>
<div class="t" style="left:771.73px;top:619.83px;font-size:10px;line-height:12px;-webkit-text-stroke:0.15px #7f7f7f;color:#7f7f7f;letter-spacing:1.628px;">z-index</div>
<div class="a inp" style="left:818.5px;top:616px"></div>
<div class="a spn" style="left:854.0px;top:616px"><div class="up"></div><div class="dn"></div></div>
<div class="t" style="left:822.00px;top:620.63px;font-size:10px;line-height:12px;-webkit-text-stroke:0.15px #3f6874;color:#3f6874;letter-spacing:0.000px;">0</div>
<div class="t" style="left:890.59px;top:618.53px;font-size:10px;line-height:12px;-webkit-text-stroke:0.15px #a8a8a8;color:#a8a8a8;letter-spacing:1.342px;">layout</div>
<div class="dd" style="left:930px;top:616px;width:100px;height:22px;border:1px solid #7ebeee;background:linear-gradient(#efefef,#e6e6e6)"><i style="left:77px;background:#3a90d8;height:14px"></i><b style="left:83px;border-top-color:#777"></b></div>
<div class="t" style="left:938.70px;top:620.83px;font-size:10px;line-height:12px;font-weight:bold;-webkit-text-stroke:0.3px #6e8a92;color:#6e8a92;letter-spacing:1.110px;">vertical</div>
<div class="t" style="left:1051.82px;top:620.33px;font-size:10px;line-height:12px;-webkit-text-stroke:0.15px #7f7f7f;color:#7f7f7f;letter-spacing:1.495px;">drop</div>
<div class="a inp" style="left:1081.5px;top:616px"></div>
<div class="a spn" style="left:1117.0px;top:616px"><div class="up"></div><div class="dn"></div></div>
<div class="t" style="left:1085.00px;top:620.63px;font-size:10px;line-height:12px;-webkit-text-stroke:0.15px #3f6874;color:#3f6874;letter-spacing:0.000px;">0</div>
<div class="t" style="left:490.88px;top:646.53px;font-size:10px;line-height:12px;-webkit-text-stroke:0.15px #7f7f7f;color:#7f7f7f;letter-spacing:1.187px;">bckgrnd</div>
<div class="a inp" style="left:540px;top:644px"></div>
<div class="a spn" style="left:575.5px;top:644px"><div class="up"></div><div class="dn"></div></div>
<div class="t" style="left:543.50px;top:648.63px;font-size:10px;line-height:12px;-webkit-text-stroke:0.15px #3f6874;color:#3f6874;letter-spacing:0.000px;">0</div>
<div class="t" style="left:645.47px;top:648.53px;font-size:10px;line-height:12px;-webkit-text-stroke:0.15px #7f7f7f;color:#7f7f7f;letter-spacing:1.226px;">shadow</div>
<div class="a inp" style="left:691.5px;top:644px"></div>
<div class="a spn" style="left:727.0px;top:644px"><div class="up"></div><div class="dn"></div></div>
<div class="t" style="left:695.00px;top:648.63px;font-size:10px;line-height:12px;-webkit-text-stroke:0.15px #3f6874;color:#3f6874;letter-spacing:0.000px;">0</div>
<div class="t" style="left:769.09px;top:648.53px;font-size:10px;line-height:12px;-webkit-text-stroke:0.15px #7f7f7f;color:#7f7f7f;letter-spacing:1.401px;">padding</div>
<div class="a inp" style="left:818.5px;top:644px"></div>
<div class="a spn" style="left:854.0px;top:644px"><div class="up"></div><div class="dn"></div></div>
<div class="t" style="left:822.00px;top:648.63px;font-size:10px;line-height:12px;-webkit-text-stroke:0.15px #3f6874;color:#3f6874;letter-spacing:0.000px;">0</div>
<div class="t" style="left:893.08px;top:646.53px;font-size:10px;line-height:12px;-webkit-text-stroke:0.15px #7f7f7f;color:#7f7f7f;letter-spacing:1.244px;">effect</div>
<div class="dd" style="left:930px;top:644px;width:100px;height:22px"><i style="left:77px"></i><b style="left:83px"></b></div>
<div class="t" style="left:938.70px;top:648.83px;font-size:10px;line-height:12px;font-weight:bold;-webkit-text-stroke:0.3px #183c48;color:#183c48;letter-spacing:1.203px;">none</div>
<div class="t" style="left:1042.08px;top:646.53px;font-size:10px;line-height:12px;-webkit-text-stroke:0.15px #7f7f7f;color:#7f7f7f;letter-spacing:1.036px;">visible</div>
<div class="a chk" style="left:602.5px;top:564px"></div>
<div class="a chk" style="left:602.5px;top:592px"></div>
<div class="a " style="left:602.5px;top:616.5px;width:22px;height:21.5px;background:#fff;border-right:2px solid #c8c8c8;border-bottom:2px solid #c8c8c8"></div>
<div class="a " style="left:605px;top:618.5px;width:16.5px;height:16.5px;background:#000"></div>
<svg style="left:617px;top:632px" width="6" height="4"><path d="M0 0H6L3 3.5Z" fill="#333"/></svg>
<div class="a " style="left:602.5px;top:644.5px;width:22px;height:21.5px;background:#fff;border-right:2px solid #c8c8c8;border-bottom:2px solid #c8c8c8;border-left:1px solid #ddd;border-top:1px solid #ddd"></div>
<svg style="left:617px;top:660px" width="6" height="4"><path d="M0 0H6L3 3.5Z" fill="#333"/></svg>
<div class="a chk" style="left:1081px;top:648px;height:14px"><svg style="left:1px;top:-1px" width="13" height="14"><path d="M2.2 7.5L5 11.3L11.5 1.5" fill="none" stroke="#222a33" stroke-width="2.2"/></svg></div>
<div class="a chk" style="left:1103px;top:648px;height:14px"><svg style="left:1px;top:-1px" width="13" height="14"><path d="M2.2 7.5L5 11.3L11.5 1.5" fill="none" stroke="#222a33" stroke-width="2.2"/></svg></div>
<div class="t" style="left:1124.80px;top:648.53px;font-size:10px;line-height:12px;-webkit-text-stroke:0.15px #3f6874;color:#3f6874;letter-spacing:1.383px;">layout</div>
<div class="a " style="left:882px;top:607px;width:157px;height:39px;border:4px solid #0b6580;border-radius:3px"></div>
</body></html>
